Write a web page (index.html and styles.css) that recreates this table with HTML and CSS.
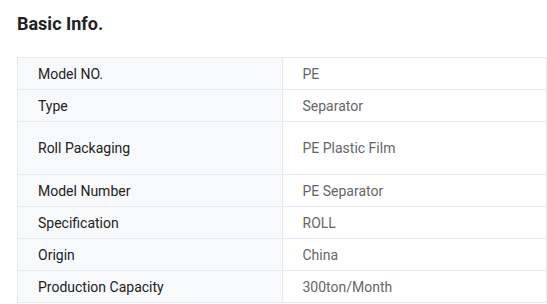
FILE: index.html
```html
<!DOCTYPE html>
<html>
<head>
<meta charset="utf-8">
<link rel="stylesheet" href="styles.css">
</head>
<body>
<div class="page">
  <h2 class="title">Basic Info.</h2>
  <table class="info">
    <tr><td class="k">Model NO.</td><td class="v">PE</td></tr>
    <tr><td class="k">Type</td><td class="v">Separator</td></tr>
    <tr class="tall"><td class="k">Roll Packaging</td><td class="v">PE Plastic Film</td></tr>
    <tr><td class="k">Model Number</td><td class="v">PE Separator</td></tr>
    <tr><td class="k">Specification</td><td class="v">ROLL</td></tr>
    <tr><td class="k">Origin</td><td class="v">China</td></tr>
    <tr><td class="k">Production Capacity</td><td class="v">300ton/Month</td></tr>
  </table>
</div>
</body>
</html>
```
FILE: styles.css
```css
html, body {
  margin: 0;
  padding: 0;
  background: #fff;
}
.page {
  padding: 13px 0 0 17px;
  font-family: Roboto, "Liberation Sans", sans-serif;
}
.title {
  margin: 0 0 22px 0;
  font-size: 18px;
  line-height: 22px;
  font-weight: 700;
  color: #222;
}
.info {
  width: 530px;
  border-collapse: collapse;
  table-layout: fixed;
  font-size: 14px;
}
.info td {
  border: 1px solid #e6e9ef;
  height: 32px;
  padding: 0 0 0 20px;
  vertical-align: middle;
  line-height: 16px;
  box-sizing: border-box;
}
.info tr.tall td {
  height: 53px;
}
.k {
  background: #f8f9fb;
  color: #222;
}
.v {
  background: #fff;
  color: #666;
}
```
